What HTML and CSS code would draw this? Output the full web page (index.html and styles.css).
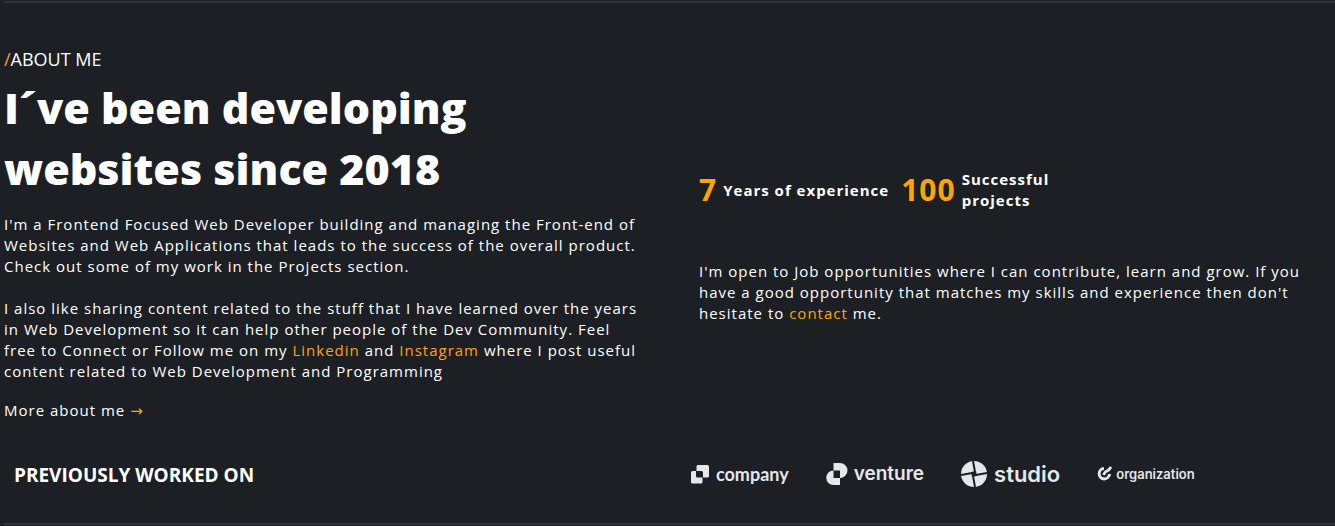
FILE: index.html
```
<!DOCTYPE html>
<html lang="en">
<head>
<meta charset="utf-8">
<title>About me</title>
<link rel="stylesheet" href="styles.css">
</head>
<body>
<main class="about">
  <div class="columns">
    <section class="story">
      <p class="eyebrow"><span class="accent">/</span>ABOUT ME</p>
      <h1 class="title">I´ve been developing websites since 2018</h1>
      <p class="text">I'm a Frontend Focused Web Developer building and managing the Front-end of Websites and Web Applications that leads to the success of the overall product. Check out some of my work in the Projects section.</p>
      <p class="text">I also like sharing content related to the stuff that I have learned over the years in Web Development so it can help other people of the Dev Community. Feel free to Connect or Follow me on my <a class="accent" href="#linkedin">Linkedin</a> and <a class="accent" href="#instagram">Instagram</a> where I post useful content related to Web Development and Programming</p>
      <a class="more" href="#more">More about me <span class="accent arrow">→</span></a>
    </section>
    <section class="facts">
      <div class="stats">
        <div class="stat"><span class="number">7</span><span class="label">Years of experience</span></div>
        <div class="stat"><span class="number">100</span><span class="label label-narrow">Successful projects</span></div>
      </div>
      <p class="text">I'm open to Job opportunities where I can contribute, learn and grow. If you have a good opportunity that matches my skills and experience then don't hesitate to <a class="accent" href="#contact">contact</a> me.</p>
    </section>
  </div>
  <div class="clients">
    <h2 class="clients-title">PREVIOUSLY WORKED ON</h2>
    <div class="logos">
      <div class="logo company">
        <svg width="20" height="20" viewBox="0 0 20 20" fill="currentColor" aria-hidden="true"><path d="M8 1h9.500a1.500 1.500 0 0 1 1.500 1.500V12a1.500 1.500 0 0 1-1.500 1.500H13V8.500A1.500 1.500 0 0 0 11.500 7H6.500V2.500A1.500 1.500 0 0 1 8 1z"/><path d="M2.500 7H6v5a1.500 1.500 0 0 0 1.500 1.500H12.500V18a1.500 1.500 0 0 1-1.500 1.500H2.500A1.500 1.500 0 0 1 1 18V8.500A1.500 1.500 0 0 1 2.500 7z"/></svg>
        <span>company</span>
      </div>
      <div class="logo venture">
        <svg width="22" height="22" viewBox="0 0 22 22" fill="currentColor" aria-hidden="true"><path d="M7.500 0H14a7.500 7.500 0 0 1 0 15V7.500H7.500z"/><path d="M7.500 7.500V15H14v7H7.500a7.250 7.250 0 0 1 0-14.500z"/></svg>
        <span>venture</span>
      </div>
      <div class="logo studio">
        <svg width="26" height="26" viewBox="0 0 26 26" aria-hidden="true"><circle cx="13" cy="13" r="13" fill="currentColor"/><path class="cut" d="M12 0L14 11M26 12L15 14M14 26L12 15M0 14L11 12"/><path class="hub" d="M10 11L15 10 16 15 11 16z"/></svg>
        <span>studio</span>
      </div>
      <div class="logo organization">
        <svg width="15" height="15" viewBox="0 0 15 15" fill="none" stroke="currentColor" aria-hidden="true"><path stroke-width="3" d="M7 2.500A5.200 5.200 0 1 0 12.500 8"/><path stroke-width="2.800" d="M6.500 9Q8 5.500 10 5Q12.500 4 14 1"/></svg>
        <span>organization</span>
      </div>
    </div>
  </div>
</main>
</body>
</html>
```
FILE: styles.css
```
* { box-sizing: border-box; }
body {
  margin: 0;
  padding: 1px 0 0 4px;
  background: #1c1f24;
  color: #fff;
  font-family: "Segoe UI", "Open Sans", sans-serif;
}
a { color: inherit; text-decoration: none; }
a.accent, .accent { color: #ffa500; }
.about {
  border-top: 2px solid #333;
  border-bottom: 2px solid #333;
}
.columns {
  display: grid;
  grid-template-columns: 640px minmax(0, 1fr);
  column-gap: 55px;
  padding: 44px 20px 0 0;
}
.eyebrow { margin: 0; font-size: 18px; line-height: 24px; }
.title {
  margin: 6px 0 15px;
  max-width: 520px;
  font-size: 43px;
  font-weight: 800;
  line-height: 61px;
}
.text {
  margin: 0;
  font-size: 15px;
  line-height: 21px;
  letter-spacing: 1px;
}
.text + .text { margin-top: 21px; }
.more {
  display: block;
  margin-top: 18px;
  font-size: 15px;
  line-height: 21px;
  letter-spacing: 1px;
}
.arrow { font-family: "DejaVu Sans", sans-serif; line-height: 1; }
.facts { padding-top: 122px; }
.stats { display: flex; gap: 12px; margin-bottom: 50px; }
.stat { display: flex; align-items: center; gap: 6px; }
.number {
  color: #ffa500;
  font-size: 30px;
  font-weight: 700;
  line-height: 42px;
  letter-spacing: 1px;
}
.label {
  font-size: 15px;
  font-weight: 700;
  line-height: 21px;
  letter-spacing: 1px;
}
.label-narrow { max-width: 100px; }
.clients {
  display: grid;
  grid-template-columns: 686px minmax(0, 1fr);
  align-items: center;
  padding: 34px 0 28px;
}
.clients-title { margin: 0; padding-left: 10px; font-size: 19px; font-weight: 700; line-height: 40px; }
.logos { display: flex; align-items: center; gap: 37px; padding-bottom: 3px; color: #e5e7eb; }
.logo { display: flex; align-items: center; gap: 6px; font-family: Inter, sans-serif; font-weight: 600; line-height: 24px; }
.logo svg { flex: none; }
.company { font-family: Lato, sans-serif; font-size: 18px; font-weight: 700; }
.venture { font-size: 19px; }
.studio { gap: 7px; font-size: 22px; }
.organization { gap: 4px; font-size: 13px; }
.cut { fill: none; stroke: #1c1f24; stroke-width: 2; }
.hub { fill: #1c1f24; }
```
